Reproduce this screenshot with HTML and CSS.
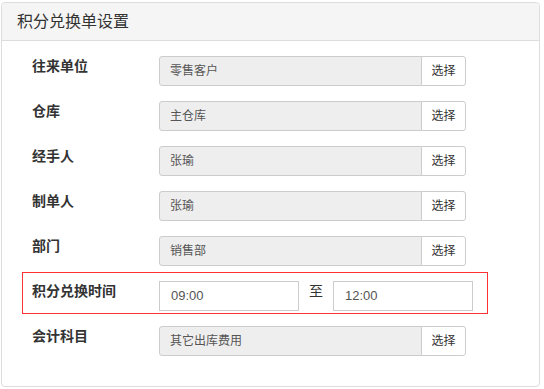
FILE: index.html
```html
<!DOCTYPE html>
<html lang="zh">

<head>
    <meta charset="UTF-8">
    <title>积分兑换单设置</title>
    <link rel="stylesheet" href="styles.css">
</head>

<body>
    <div class="panel">
        <div class="panel-head">积分兑换单设置</div>

        <div class="panel-body">
            <div class="row">
                <div class="label">往来单位</div>
                <div class="field">零售客户</div>
                <div class="btn">选择</div>
            </div>
            <div class="row">
                <div class="label">仓库</div>
                <div class="field">主仓库</div>
                <div class="btn">选择</div>
            </div>
            <div class="row">
                <div class="label">经手人</div>
                <div class="field">张瑜</div>
                <div class="btn">选择</div>
            </div>
            <div class="row">
                <div class="label">制单人</div>
                <div class="field">张瑜</div>
                <div class="btn">选择</div>
            </div>
            <div class="row">
                <div class="label">部门</div>
                <div class="field">销售部</div>
                <div class="btn">选择</div>
            </div>
            <div class="row row-time">
                <div class="label">积分兑换时间</div>
                <div class="time">09:00</div>
                <div class="to">至</div>
                <div class="time">12:00</div>
            </div>
            <div class="row">
                <div class="label">会计科目</div>
                <div class="field">其它出库费用</div>
                <div class="btn">选择</div>
            </div>
        </div>
    </div>
</body>

</html>
```

FILE: styles.css
```css
* {
    padding: 0;
    margin: 0;
    box-sizing: border-box;
}

body {
    background: #fff;
    color: #333;
    font-family: "Liberation Sans", "Noto Sans CJK SC", sans-serif;
}

.panel {
    width: 539px;
    margin: 2px 0 0 1px;
    border: 1px solid #ddd;
    border-radius: 4px;
}

.panel-head {
    height: 38px;
    padding-left: 15px;
    background: #f5f5f5;
    border-bottom: 1px solid #ddd;
    border-radius: 4px 4px 0 0;
    font-size: 16px;
    line-height: 37px;
    color: #333;
}

.panel-body {
    padding: 15px 0 30px 30px;
    display: flex;
    flex-direction: column;
    gap: 15px;
}

.row {
    display: flex;
    align-items: flex-start;
}

.label {
    width: 127px;
    font-size: 14px;
    font-weight: bold;
    line-height: 20px;
    color: #333;
}

.field {
    width: 263px;
    height: 30px;
    padding-left: 10px;
    background: #eee;
    border: 1px solid #ccc;
    border-radius: 3px 0 0 3px;
    font-size: 12px;
    line-height: 28px;
    color: #555;
}

.btn {
    width: 45px;
    height: 30px;
    margin-left: -1px;
    background: #fff;
    border: 1px solid #ccc;
    border-radius: 0 3px 3px 0;
    font-size: 12px;
    line-height: 28px;
    text-align: center;
    color: #333;
}

/* 红框那一行 */
.row-time {
    width: 466px;
    margin: -9px 0 -3px -10px;
    padding: 8px 0 2px 9px;
    border: 1px solid #f33;
}

.time {
    width: 140px;
    height: 30px;
    padding-left: 11px;
    border: 1px solid #ccc;
    font-size: 13px;
    line-height: 28px;
    color: #555;
}

.to {
    width: 34px;
    padding-left: 10px;
    font-size: 14px;
    line-height: 20px;
    color: #333;
}
```
